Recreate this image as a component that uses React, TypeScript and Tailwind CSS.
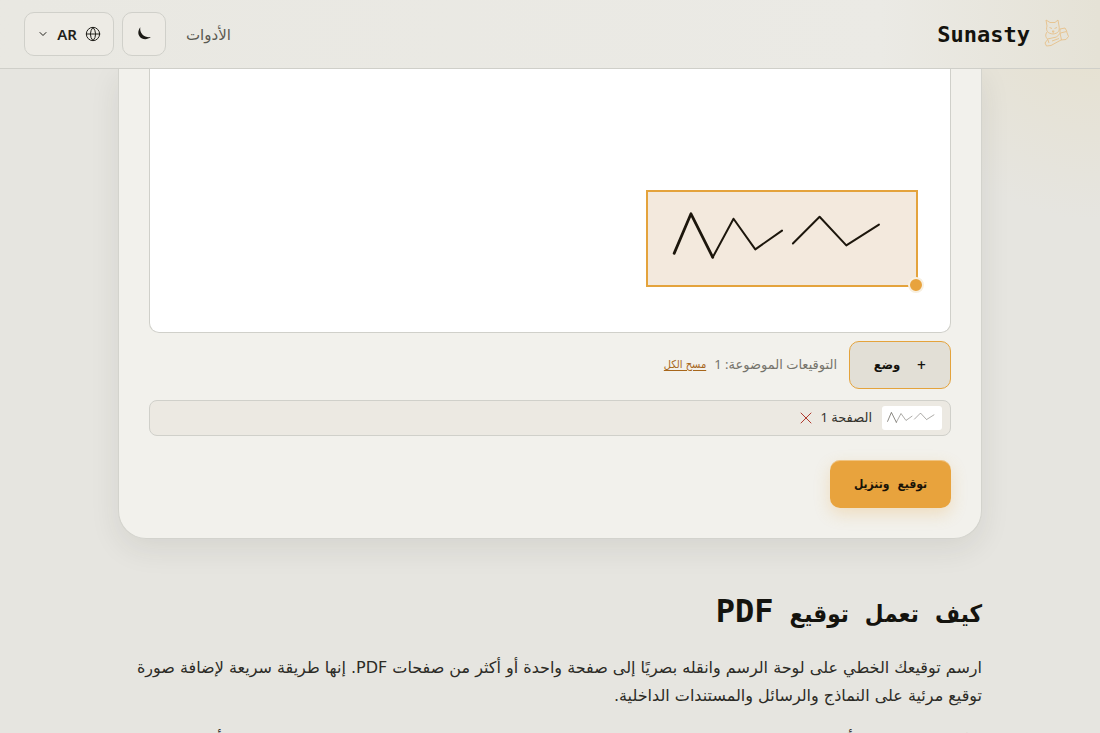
import { Globe, ChevronDown, X } from "lucide-react";

function Signature({ className, stroke }: { className: string; stroke: number }) {
  return (
    <svg className={className} viewBox="0 0 268 94" fill="none" stroke="#1c160c" strokeLinecap="round" strokeLinejoin="round">
      <path d="M25 62 42 22 64 66" strokeWidth={stroke + 0.8} />
      <path d="M64 66 85 27 107 58 134 39" strokeWidth={stroke} />
      <path d="M145 52 172 25 199 54 232 33" strokeWidth={stroke} />
    </svg>
  );
}

function CatLogo() {
  return (
    <svg className="h-9 w-9" viewBox="0 0 36 36" fill="none" stroke="#e6c18a" strokeWidth="0.9" strokeLinejoin="round" aria-hidden="true">
      <path d="M7 10 6 4l4 2.500h5L18 4l1 6c1 5-1 7.500-6 8-5-.5-7.500-3-6-8Z" />
      <path d="m9.500 11.500 2.500 1m5-1-2.500 1M12.200 15h2l-1 1.200Zm1 1.200v1" />
      <path d="M7 16c-2 3-1.500 5 .5 7l9-2 4-4 6-1.500 2 5-2.500 3-5 .5-10 5.500-4.500.5L5 27l3-4" />
      <path d="M20 17v-4l5-1 2 3.500m-7 1.500 1.500 7M8 24l1 3M12 25l7-2.500" />
    </svg>
  );
}

function MoonIcon() {
  return (
    <svg className="h-4 w-4" viewBox="0 0 16 16" fill="currentColor" aria-hidden="true">
      <path d="M4.300 1.200C2.200 4 1.500 7.500 3.600 10.400c2.300 3.100 7.200 3.900 11.200.6-3 .5-6.200-.2-8.400-2.600C4.500 6.400 3.900 3.700 4.300 1.200Z" />
    </svg>
  );
}

function Header() {
  return (
    <header className="relative z-10 flex h-[69px] shrink-0 items-center justify-between border-b border-[#cfcfc9] bg-linear-to-l from-[#e5e2d6] via-[#ebeae5] via-20% to-[#e9e8e2] px-6">
      <a href="#" className="flex items-center gap-2.5 font-['DejaVu_Sans_Mono',monospace] text-[22px] font-bold text-[#14130e]">
        <CatLogo />
        <span dir="ltr">Sunasty</span>
      </a>
      <nav className="flex items-center gap-2">
        <a href="#" className="me-3 text-[15px] text-[#5a5952]">
          الأدوات
        </a>
        <button aria-label="المظهر" className="flex h-11 w-11 items-center justify-center rounded-[10px] border border-[#d0d0ca] bg-[#edebe5] text-[#1b1a15]">
          <MoonIcon />
        </button>
        <button className="flex h-11 w-[90px] items-center justify-center gap-2 rounded-[10px] border border-[#d0d0ca] bg-[#edebe5] text-[15px] font-semibold text-[#1f1e19]">
          <Globe className="h-4 w-4" strokeWidth={1.5} />
          AR
          <ChevronDown className="h-3 w-3" />
        </button>
      </nav>
    </header>
  );
}

function SignCard() {
  return (
    <section className="rounded-b-[28px] border border-t-0 border-[#d3d3cd] bg-[#f2f1ec] px-[30px] pb-[30px] shadow-[0_10px_30px_rgba(40,40,30,0.09)]">
      <div className="flex h-[264px] items-end rounded-b-[10px] border border-t-0 border-[#d0d0ca] bg-white ps-8 pb-[45px]">
        <div className="relative h-[97px] w-[272px] border-2 border-[#e4a33c] bg-[#f3e9dd]">
          <Signature className="h-full w-full" stroke={2} />
          <span className="absolute -right-2 -bottom-2 h-4 w-4 rounded-full border-2 border-[#f7efe0] bg-[#e8a33d]" />
        </div>
      </div>

      <div className="mt-2 flex items-center gap-3">
        <button className="flex h-12 w-[102px] items-center justify-center gap-4 rounded-[10px] border border-[#e4a33c] bg-[#e2dfd6] font-['DejaVu_Sans_Condensed','DejaVu_Sans',sans-serif] text-[13px] font-bold text-[#14130e]">
          <span>+</span>
          <span>وضع</span>
        </button>
        <p className="flex items-center gap-2 text-[13px] text-[#75736b]">
          التوقيعات الموضوعة: 1
          <a href="#" className="font-['DejaVu_Sans_Condensed','DejaVu_Sans',sans-serif] text-[11px] text-[#a7661a] underline underline-offset-2">
            مسح الكل
          </a>
        </p>
      </div>

      <div className="mt-[11px] flex h-9 items-center gap-2.5 rounded-lg border border-[#d0d0ca] bg-[#ece9e2] px-2 text-[13px] text-[#35342e]">
        <span className="flex h-6 w-[60px] items-center rounded-[3px] bg-white">
          <Signature className="h-6 w-full opacity-80" stroke={2} />
        </span>
        <div className="flex items-center gap-1">
          <span>الصفحة 1</span>
          <button aria-label="حذف" className="text-[#b0392e]">
            <X className="h-5 w-5" strokeWidth={1.2} />
          </button>
        </div>
      </div>

      <button className="mt-6 flex h-12 w-[121px] items-center justify-center gap-2 rounded-[10px] bg-[#e8a33d] font-['DejaVu_Sans_Condensed','DejaVu_Sans',sans-serif] text-xs font-bold text-[#1a1408] shadow-[0_6px_16px_rgba(232,163,61,0.25),inset_0_1px_0_rgba(255,255,255,0.35)]">
        <span>توقيع</span>
        <span>وتنزيل</span>
      </button>
    </section>
  );
}

export default function App() {
  return (
    <div dir="rtl" className="flex h-screen flex-col overflow-hidden bg-[#e6e5e0] bg-[radial-gradient(circle_at_100%_0,#e6e0cd_0,#e6e5e0_220px)] font-['Noto_Sans','DejaVu_Sans',sans-serif]">
      <Header />
      <main className="mx-auto w-full max-w-[864px]">
        <SignCard />
        <article className="mt-12 font-['DejaVu_Sans',sans-serif] text-base leading-7 text-[#2c2b26]">
          <h2 className="flex items-baseline gap-4 font-['DejaVu_Sans_Condensed','DejaVu_Sans',sans-serif] text-2xl leading-[48px] font-bold text-[#14130e]">
            <span>كيف</span>
            <span>تعمل</span>
            <span>توقيع</span>
            <span className="font-['DejaVu_Sans_Mono',monospace] text-[32px]">PDF</span>
          </h2>
          <p className="mt-4">
            ارسم توقيعك الخطي على لوحة الرسم وانقله بصريًا إلى صفحة واحدة أو أكثر من صفحات PDF. إنها طريقة سريعة لإضافة صورة توقيع مرئية على النماذج والرسائل والمستندات الداخلية.
          </p>
          <p className="mt-4">
            يمكنك وضع التوقيع أكثر من مرة في المستند نفسه، وتبقى جميع الملفات على جهازك طوال العمل، ثم تنزيل الملف أو حفظه.
          </p>
        </article>
      </main>
    </div>
  );
}
